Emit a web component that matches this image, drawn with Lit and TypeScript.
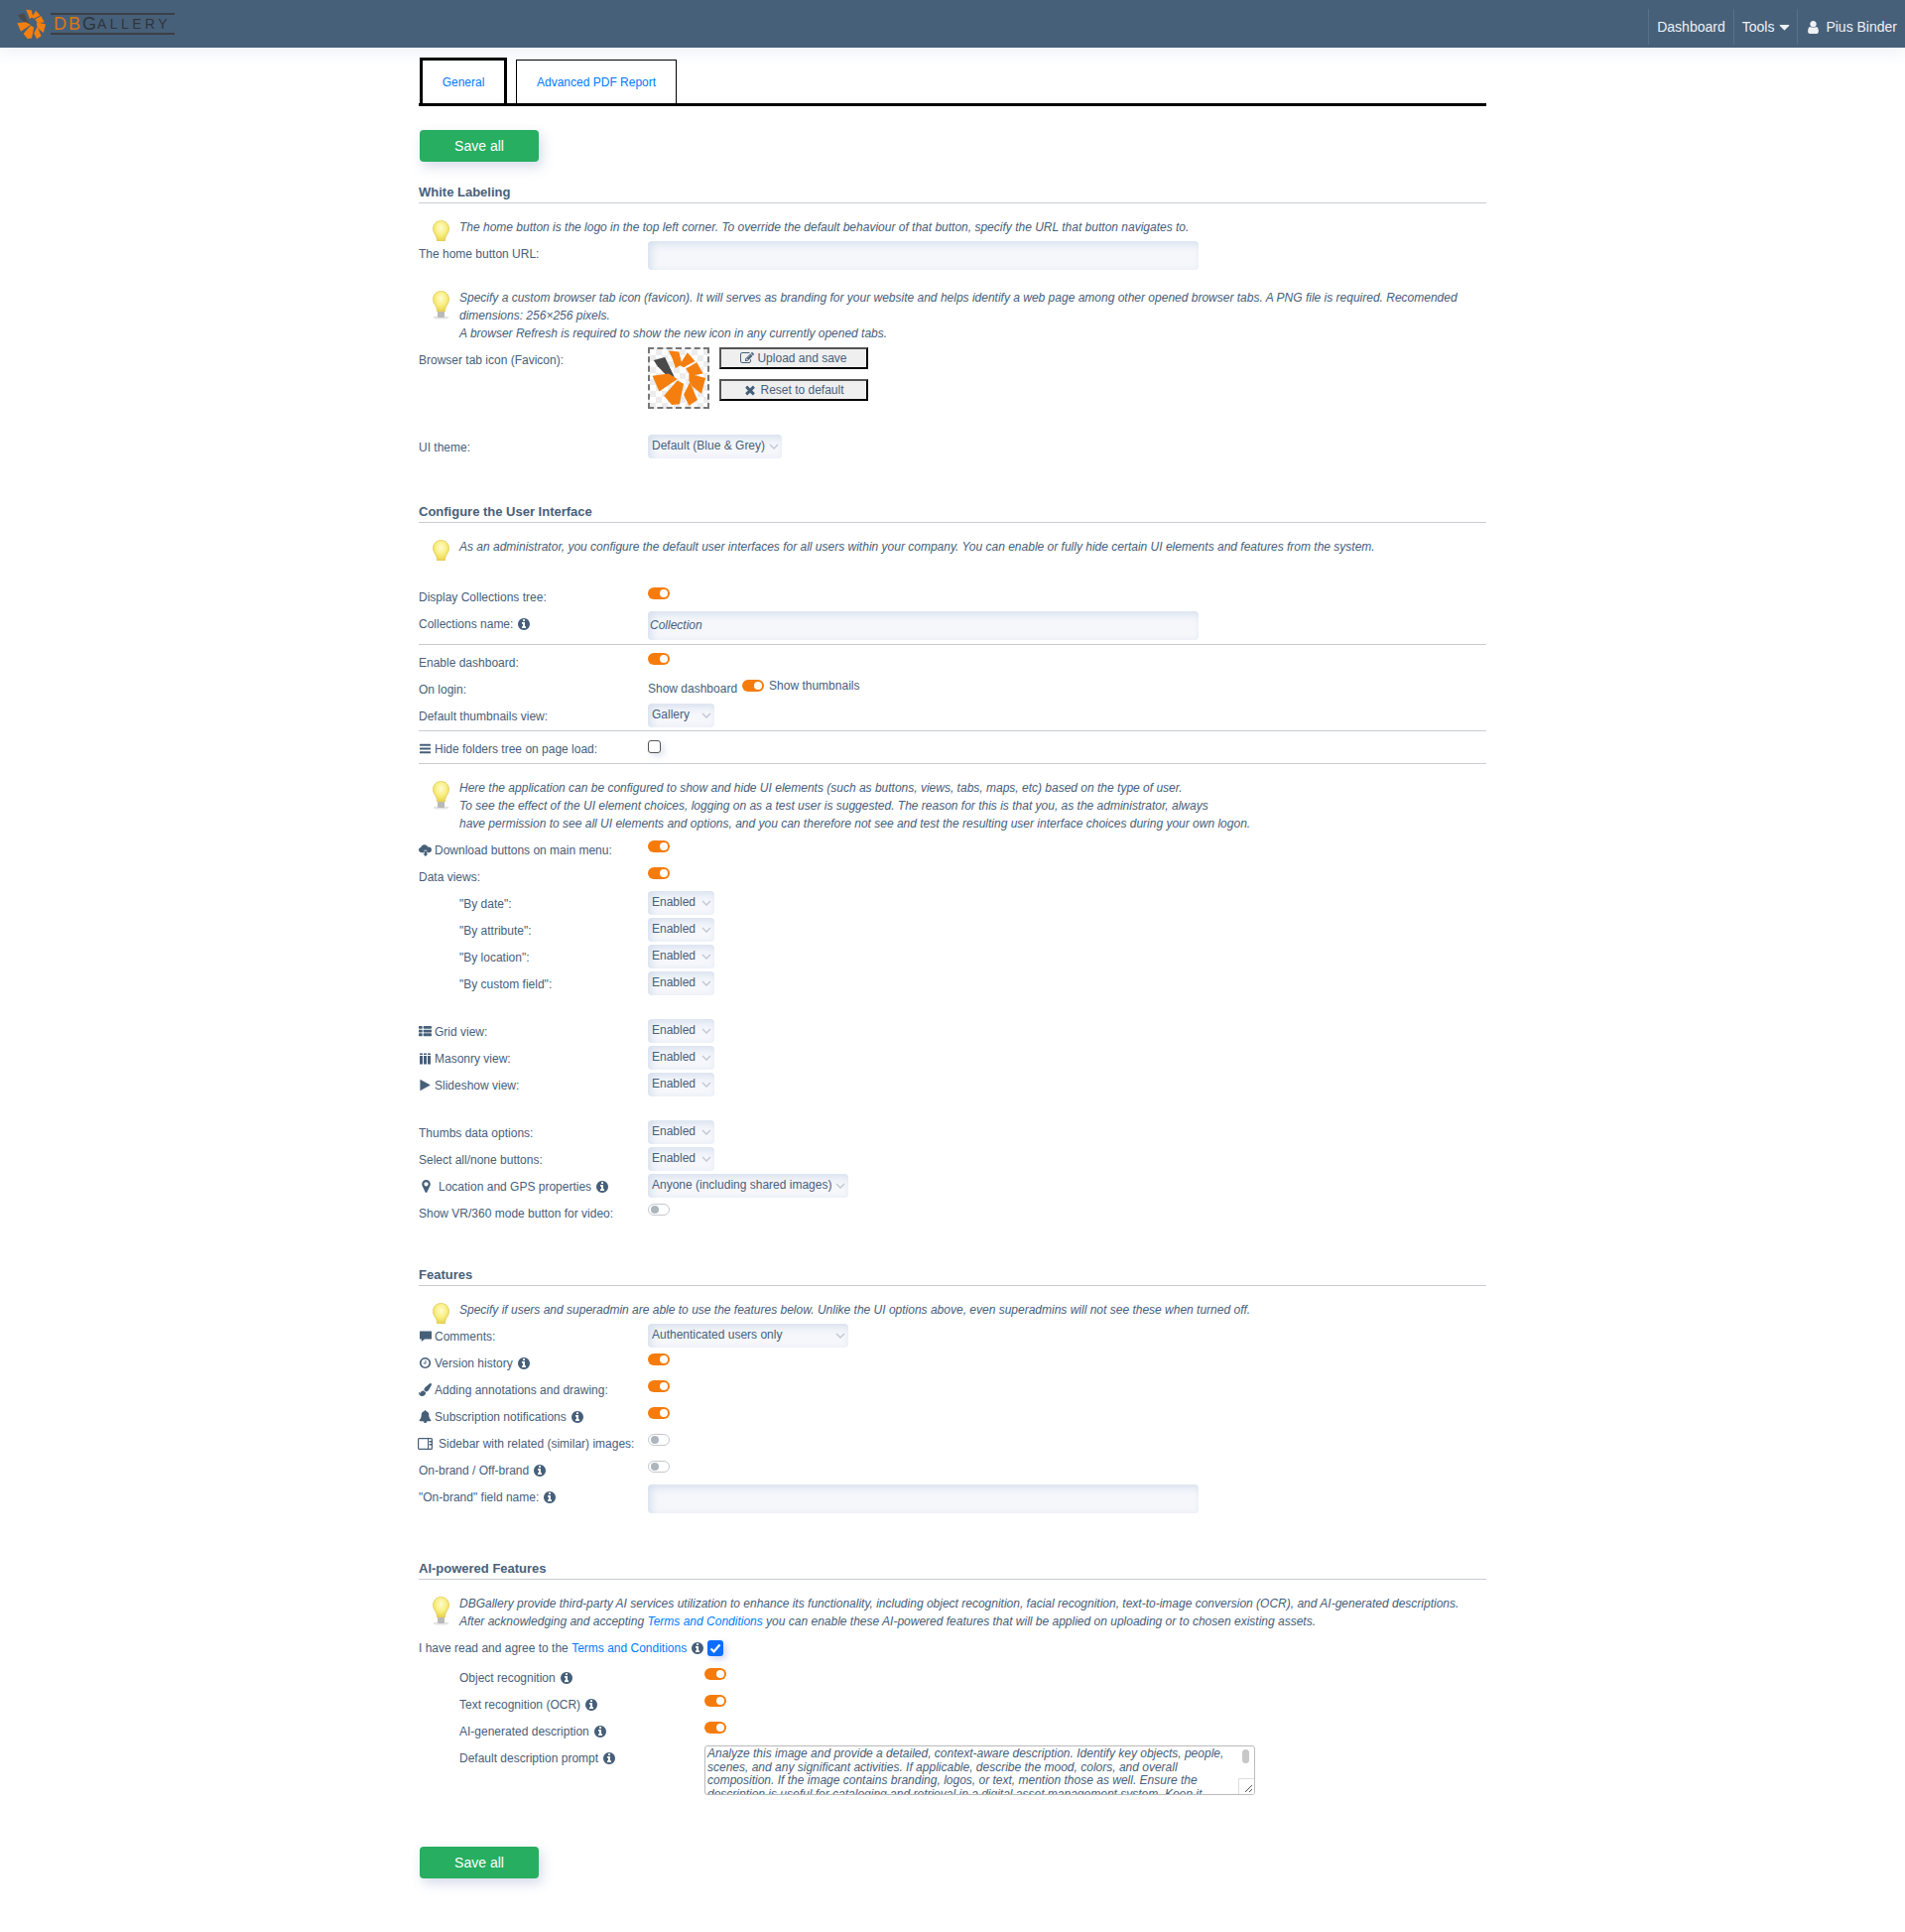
import { LitElement, html, css, svg, TemplateResult } from "lit";
import { customElement } from "lit/decorators.js";

const P: Record<string, [string, string]> = {
  info: ["0 0 1792 1792", "M1152 1376v-160q0-14-9-23t-23-9h-96v-512q0-14-9-23t-23-9h-320q-14 0-23 9t-9 23v160q0 14 9 23t23 9h96v320h-96q-14 0-23 9t-9 23v160q0 14 9 23t23 9h448q14 0 23-9t9-23zm-128-896v-160q0-14-9-23t-23-9h-192q-14 0-23 9t-9 23v160q0 14 9 23t23 9h192q14 0 23-9t9-23zm640 416q0 209-103 385.5t-279.5 279.5-385.5 103-385.5-103-279.5-279.5-103-385.5 103-385.5 279.5-279.5 385.5-103 385.5 103 279.5 279.5 103 385.5z"],
  bars: ["0 0 1792 1792", "M1664 1344v128q0 26-19 45t-45 19h-1408q-26 0-45-19t-19-45v-128q0-26 19-45t45-19h1408q26 0 45 19t19 45zm0-512v128q0 26-19 45t-45 19h-1408q-26 0-45-19t-19-45v-128q0-26 19-45t45-19h1408q26 0 45 19t19 45zm0-512v128q0 26-19 45t-45 19h-1408q-26 0-45-19t-19-45v-128q0-26 19-45t45-19h1408q26 0 45 19t19 45z"],
  user: ["0 0 1792 1792", "M1536 1399q0 109-62.5 187t-150.5 78h-854q-88 0-150.5-78t-62.5-187q0-85 8.5-160.5t31.5-152 58.5-131 94-89 134.5-34.5q131 128 313 128t313-128q76 0 134.5 34.5t94 89 58.5 131 31.5 152 8.5 160.5zm-256-887q0 159-112.5 271.5t-271.5 112.5-271.5-112.5-112.5-271.5 112.5-271.5 271.5-112.5 271.5 112.5 112.5 271.5z"],
  times: ["0 0 1792 1792", "M1490 1322q0 40-28 68l-136 136q-28 28-68 28t-68-28l-294-294-294 294q-28 28-68 28t-68-28l-136-136q-28-28-28-68t28-68l294-294-294-294q-28-28-28-68t28-68l136-136q28-28 68-28t68 28l294 294 294-294q28-28 68-28t68 28l136 136q28 28 28 68t-28 68l-294 294 294 294q28 28 28 68z"],
  play: ["0 0 1792 1792", "M1576 927l-1328 738q-23 13-39.5 3t-16.5-36v-1472q0-26 16.5-36t39.5 3l1328 738q23 13 23 31t-23 31z"],
  marker: ["0 0 1792 1792", "M1152 640q0-106-75-181t-181-75-181 75-75 181 75 181 181 75 181-75 75-181zm256 0q0 109-33 179l-364 774q-16 33-47.5 52t-67.5 19-67.5-19-46.5-52l-365-774q-33-70-33-179 0-212 150-362t362-150 362 150 150 362z"],
  bell: ["0 0 1792 1792", "M912 1696q0-16-16-16-59 0-101.5-42.5t-42.5-101.5q0-16-16-16t-16 16q0 73 51.5 124.5t124.5 51.5q16 0 16-16zm816-288q0 52-38 90t-90 38h-448q0 106-75 181t-181 75-181-75-75-181h-448q-52 0-90-38t-38-90q50-42 91-88t85-119.5 74.5-158.5 50-206 19.5-260q0-152 117-282.5t307-158.5q-8-19-8-39 0-40 28-68t68-28 68 28 28 68q0 20-8 39 190 28 307 158.5t117 282.5q0 139 19.5 260t50 206 74.5 158.5 85 119.5 91 88z"],
  clock: ["0 0 1792 1792", "M1024 544v448q0 14-9 23t-23 9h-320q-14 0-23-9t-9-23v-64q0-14 9-23t23-9h224v-352q0-14 9-23t23-9h64q14 0 23 9t9 23zm416 352q0-148-73-273t-198-198-273-73-273 73-198 198-73 273 73 273 198 198 273 73 273-73 198-198 73-273zm224 0q0 209-103 385.5t-279.5 279.5-385.5 103-385.5-103-279.5-279.5-103-385.5 103-385.5 279.5-279.5 385.5-103 385.5 103 279.5 279.5 103 385.5z"],
  list: ["0 0 1792 1792", "M512 1248v192q0 40-28 68t-68 28h-320q-40 0-68-28t-28-68v-192q0-40 28-68t68-28h320q40 0 68 28t28 68zm0-512v192q0 40-28 68t-68 28h-320q-40 0-68-28t-28-68v-192q0-40 28-68t68-28h320q40 0 68 28t28 68zm1280 512v192q0 40-28 68t-68 28h-960q-40 0-68-28t-28-68v-192q0-40 28-68t68-28h960q40 0 68 28t28 68zm-1280-1024v192q0 40-28 68t-68 28h-320q-40 0-68-28t-28-68v-192q0-40 28-68t68-28h320q40 0 68 28t28 68zm1280 512v192q0 40-28 68t-68 28h-960q-40 0-68-28t-28-68v-192q0-40 28-68t68-28h960q40 0 68 28t28 68zm0-512v192q0 40-28 68t-68 28h-960q-40 0-68-28t-28-68v-192q0-40 28-68t68-28h960q40 0 68 28t28 68z"],
  brush: ["0 0 1792 1792", "M1615 0q70 0 122.5 46.5t52.5 116.5q0 63-45 151-332 629-465 752-97 91-218 91-126 0-216.5-92.5t-90.5-219.5q0-128 92-212l638-579q59-54 130-54zm-909 1034q39 76 106.5 130t150.5 76l1 71q4 213-129.5 347t-348.5 134q-123 0-218-46.5t-152.5-127.5-86.5-183-29-220q7 5 41 30t62 44.5 59 36.5 46 17q41 0 55-37 25-66 57.5-112.5t69.5-76 88-47.5 103-25.5 125-10.5z"],
  edit: ["0 0 1792 1792", "M888 1184l116-116-152-152-116 116v56h96v96h56zm440-720q-16-16-33 1l-350 350q-17 17-1 33t33-1l350-350q17-17 1-33zm80 594v190q0 119-84.5 203.5t-203.5 84.5h-832q-119 0-203.5-84.5t-84.5-203.5v-832q0-119 84.5-203.5t203.5-84.5h832q63 0 117 25 15 7 18 23 3 17-9 29l-49 49q-14 14-32 8-23-6-45-6h-832q-66 0-113 47t-47 113v832q0 66 47 113t113 47h832q66 0 113-47t47-113v-126q0-13 9-22l64-64q15-15 35-7t20 29zm-96-738l288 288-672 672h-288v-288zm444 132l-92 92-288-288 92-92q28-28 68-28t68 28l152 152q28 28 28 68t-28 68z"],
  caret: ["0 0 1792 1792", "M1408 704q0 26-19 45l-448 448q-19 19-45 19t-45-19l-448-448q-19-19-19-45t19-45 45-19h896q26 0 45 19t19 45z"],
};

const ic = (n: string, cls = "ic") =>
  html`<svg class=${cls} viewBox=${P[n][0]}><path fill="currentColor" d=${P[n][1]}></path></svg>`;

const info = () => ic("info", "info");

const masonry = () => html`<svg class="ic" viewBox="0 0 13 13"><path fill="currentColor" d="M1 1.5h3V3H1zM5 1.5h3V3H5zM9 1.5h3V3H9zM1 4h3v8.5H1zM5 4h3v8.5H5zM9 4h3v8.5H9z"></path></svg>`;

const comment = () => html`<svg class="ic" viewBox="0 0 13 13"><path fill="currentColor" d="M1.5 1.5h11q.5 0 .5.5v7q0 .5-.5.5H6l-3.2 2.6V9.5H1.5Q1 9.5 1 9V2q0-.5.5-.5z"></path></svg>`;

const cloud = () => html`<svg class="ic" viewBox="0 0 13 13"><path fill="currentColor" d="M3 9.2C1.3 9.2 0 8 0 6.6 0 5.3 1 4.3 2.2 4.1 2.5 2.4 4 1.2 5.8 1.2c1.6 0 3 1 3.4 2.4.3-.1.6-.2 1-.2 1.5 0 2.8 1.2 2.8 2.8 0 1.7-1.3 3-3 3H8.2V6.8H5.6v2.4z"></path><path fill="currentColor" d="M5.8 7.4h2.2v3h1.5L6.9 13 4.3 10.4h1.5z"></path></svg>`;

const sidebar = () => html`<svg class="ic-wide" viewBox="0 0 15 12"><rect x=".6" y=".6" width="13.8" height="10.8" rx="1" fill="none" stroke="currentColor" stroke-width="1.2"></rect><path fill="currentColor" d="M10 1h1v10h-1zM11.5 3h2.5v1.6h-2.5zM11.5 6h2.5v1.6h-2.5z"></path></svg>`;

const petals: string[] = [
  "60,5 93,8 103,48 82,60 72,30",
  "120,10 144,38 108,58 95,50",
  "150,42 170,78 130,85 115,62",
  "125,78 178,92 165,142 135,118 125,100",
  "128,105 152,162 125,180 108,145",
  "88,100 108,110 95,175 70,178 45,148",
  "8,85 60,78 88,95 30,135",
];
const flower = (cls: string) => html`<svg class=${cls} viewBox="0 0 184 184">
  <polygon points="12,35 48,25 78,88 65,95 25,55" fill="#4a4a4a"></polygon>
  ${petals.map((p) => svg`<polygon points=${p} fill="#f57f0e"></polygon>`)}
</svg>`;

const bulb = () => html`<svg class="bulb" viewBox="0 0 17 29">
  <defs><radialGradient id="bg" cx=".5" cy=".35" r=".65"><stop offset="0" stop-color="#fffbd0"></stop><stop offset=".55" stop-color="#f8ee80"></stop><stop offset="1" stop-color="#e6d04a"></stop></radialGradient></defs>
  <ellipse cx="8.5" cy="27" rx="8" ry="1.6" fill="#e3e3e3"></ellipse>
  <path d="M8.5.5C3.8.5.5 4 .5 8.5c0 3.5 2 5.5 3 7.5.7 1.4 1 3 1 5h8c0-2 .3-3.6 1-5 1-2 3-4 3-7.5C16.5 4 13.2.5 8.5.5z" fill="url(#bg)" stroke="#e2cd5a" stroke-width=".8"></path>
  <rect x="5" y="21" width="7" height="6" rx="1" fill="#b9b9b9"></rect>
</svg>`;

const toggle = (on: boolean) => html`<span class="toggle ${on ? "on" : "off"}"><span class="knob"></span></span>`;

const sel = (label: string, cls: string) => html`<span class="sel ${cls}">${label}<svg class="chev" viewBox="0 0 10 6"><path d="M1 1l4 4 4-4" fill="none" stroke="#c3cad4" stroke-width="1.5"></path></svg></span>`;

const enabled = () => sel("Enabled", "sel-s");

const row = (label: unknown, control: unknown, cls = "") =>
  html`<div class="row ${cls}"><div class="lab">${label}</div><div class="ctl">${control}</div></div>`;

const note = (cls: string, ...lines: unknown[]) =>
  html`<div class="note ${cls}"><div class="bulb-wrap">${bulb()}</div><div class="note-text">${lines.map((l) => html`<div>${l}</div>`)}</div></div>`;

const PROMPT =
  "Analyze this image and provide a detailed, context-aware description. Identify key objects, people, scenes, and any significant activities. If applicable, describe the mood, colors, and overall composition. If the image contains branding, logos, or text, mention those as well. Ensure the description is useful for cataloging and retrieval in a digital asset management system. Keep it concise and factual.";

@customElement("app-root")
export class AppRoot extends LitElement {
  static styles = css`
    :host { display: block; font-family: "Liberation Sans", Arial, sans-serif; font-size: 12px; color: #47607a; background: #fff; min-height: 1947px; }
    * { box-sizing: border-box; }
    a { color: #007bff; text-decoration: none; }
    header { height: 48px; background: #476079; display: flex; justify-content: space-between; box-shadow: 0 4px 16px rgba(110,130,190,.13); position: relative; }
    .logo { display: flex; align-items: center; padding-left: 16px; gap: 4px; }
    .flower { width: 31px; height: 31px; }
    .wordmark { width: 125px; height: 22px; border-top: 2px solid #3a3f46; border-bottom: 2px solid #3a3f46; display: flex; align-items: center; padding-left: 3px; line-height: 18px; white-space: nowrap; }
    .db { color: #dd7710; font-size: 18px; letter-spacing: 2px; }
    .g { color: #2f343a; font-size: 18px; letter-spacing: 1px; }
    .allery { color: #2f343a; font-size: 14px; letter-spacing: 3.4px; }
    nav { display: flex; color: #eef1f5; font-size: 14px; padding-top: 9px; height: 45px; }
    nav > div { border-left: 1px solid #58708a; padding: 0 8px 0; display: flex; align-items: center; }
    nav .ic-user { width: 15px; height: 15px; margin-right: 5px; }
    nav .ic-caret { width: 17px; height: 17px; margin: 0 -4px 0 2px; }
    main { width: 1076px; margin-left: 422px; }
    .tabs { margin-top: 10px; height: 49px; border-bottom: 3px solid #000; display: flex; gap: 9px; align-items: flex-end; }
    .tab { color: #007bff; border: 1px solid #000; border-bottom: 0; height: 44px; padding: 0 20px; display: flex; align-items: center; }
    .tab.active { border-width: 3px; border-bottom: 0; height: 46px; width: 88px; padding: 0; justify-content: center; margin-left: 1px; }
    .save { display: flex; align-items: center; justify-content: center; width: 120px; height: 32px; background: #27ae60; color: #fff; font-size: 14px; border-radius: 4px; box-shadow: 3px 5px 12px rgba(90,110,170,.25); margin-left: 1px; }
    .save.top { margin-top: 24px; }
    .save.bottom { margin-top: 51px; }
    h3 { margin: 0; font-size: 13px; font-weight: bold; height: 23px; line-height: 24px; border-bottom: 1px solid #c9cdd2; }
    h3.s1 { margin-top: 19px; }
    h3.s2 { margin-top: 40px; }
    h3.s3 { margin-top: 37px; }
    h3.s4 { margin-top: 47px; }
    .note { display: flex; margin-top: 15px; padding-left: 14px; font-style: italic; line-height: 18px; }
    .note.m22 { margin-top: 22px; }
    .bulb-wrap { width: 17px; margin-right: 10px; overflow: hidden; padding-top: 2px; flex: none; contain: size; }
    .bulb { display: block; width: 17px; height: 29px; }
    .note-text { padding-bottom: 5px; flex: 1; }
    .row { display: flex; height: 27px; }
    .row.pull { margin-top: -1px; }
    .row.m23 { margin-top: 23px; }
    .row.m21 { margin-top: 21px; }
    .row.m3 { margin-top: 3px; }
    .row.fav { height: 88px; }
    .row.area-row { height: 52px; }
    .lab { width: 231px; height: 27px; flex: none; display: flex; align-items: center; white-space: nowrap; }
    .row.sub .lab { padding-left: 41px; }
    .row.ai .lab { width: 288px; padding-left: 41px; }
    .ctl { flex: 1; display: flex; align-items: flex-start; line-height: 27px; }
    .ic { width: 13px; height: 13px; margin-right: 3px; flex: none; }
    .ic-wide { width: 15px; height: 12px; margin: 0 6px 0 -1px; flex: none; }
    .ic-pin { width: 15px; height: 15px; margin-right: 5px; flex: none; }
    .info { width: 14px; height: 14px; margin-left: 4px; flex: none; }
    .input { margin-top: 1px; width: 555px; height: 29px; background: #f5f7fb; border-radius: 4px; box-shadow: inset 3px 3px 8px #d6dfed; font-style: italic; padding-left: 2px; line-height: 29px; }
    .sel { position: relative; display: block; margin-top: 1px; height: 24px; line-height: 23px; background: #f5f7fb; border-radius: 4px; box-shadow: inset 3px 3px 8px #d6dfed; padding-left: 4px; white-space: nowrap; }
    .sel-s { width: 67px; }
    .sel-m { width: 135px; }
    .sel-l { width: 202px; }
    .chev { position: absolute; right: 3px; top: 9px; width: 10px; height: 6px; }
    .toggle { display: block; width: 22px; height: 12px; border-radius: 6px; margin-top: 4px; position: relative; flex: none; }
    .toggle.on { background: #f57c0c; }
    .toggle.off { background: #fff; border: 1px solid #c4c8cc; }
    .knob { position: absolute; width: 8px; height: 8px; border-radius: 50%; }
    .on .knob { background: #fff; right: 2px; top: 2px; }
    .off .knob { background: #adb5bd; left: 2px; top: 1px; }
    .cb { display: block; margin-top: 5px; width: 13px; height: 13px; border: 1px solid #555; border-radius: 3px; background: #fff; box-shadow: 3px 3px 6px rgba(110,130,190,.22); }
    .cb-on { display: block; margin: 0 0 0 3px; width: 16px; height: 16px; border-radius: 3px; background: #0d6efd; box-shadow: 3px 3px 6px rgba(110,130,190,.3); flex: none; }
    .cb-on svg { display: block; width: 16px; height: 16px; }
    hr { margin: 0; border: 0; border-top: 1px solid #c9cdd2; height: 1px; }
    hr.a { margin: 7px 0 4px; }
    hr.b { margin: 1px 0 4px; }
    hr.c { margin: 1px 0 0; }
    .favicon { margin-top: 1px; width: 62px; height: 62px; border: 2px dashed #777; background-color: #fff; background-image: conic-gradient(#ececec 25%, #fff 25% 50%, #ececec 50% 75%, #fff 75%); background-size: 12px 12px; flex: none; }
    .favicon .big { display: block; width: 58px; height: 58px; }
    .fbtns { display: flex; flex-direction: column; gap: 10px; margin: 1px 0 0 10px; }
    .fbtn { width: 150px; height: 22px; background: #efefef; border: 2px solid; border-color: #555 #000 #000 #555; display: flex; align-items: center; justify-content: center; line-height: 18px; }
    .fbtn .ic { width: 14px; height: 14px; margin-right: 3px; }
    .login { display: flex; align-items: flex-start; white-space: nowrap; }
    .login .t1 { margin-top: 1px; line-height: 25px; }
    .login .t2 { margin: -2px 0 0 5px; line-height: 25px; }
    .login .toggle { margin: 4px 0 0 5px; }
    .area { position: relative; margin-top: 1px; width: 555px; height: 50px; border: 1px solid #bbb; border-radius: 3px; overflow: hidden; font: italic 12px/13.5px "Liberation Sans", Arial, sans-serif; color: #47607a; padding: 1px 18px 0 2px; background: #fff; }
    .thumb { position: absolute; right: 5px; top: 3px; width: 7px; height: 14px; border-radius: 4px; background: #c8c8c8; }
    .corner { position: absolute; right: 0; bottom: 0; width: 16px; height: 16px; background: #fff; border: 1px solid #ddd; border-width: 1px 0 0 1px; }
    .corner svg { display: block; width: 15px; height: 15px; }
    .tail { height: 54px; }
  `;

  render(): TemplateResult {
    return html`
      <header>
        <div class="logo">
          ${flower("flower")}
          <div class="wordmark"><span class="db">DB</span><span class="g">G</span><span class="allery">ALLERY</span></div>
        </div>
        <nav>
          <div>Dashboard</div>
          <div>Tools${ic("caret", "ic-caret")}</div>
          <div>${ic("user", "ic-user")}Pius Binder</div>
        </nav>
      </header>
      <main>
        <div class="tabs"><div class="tab active">General</div><div class="tab">Advanced PDF Report</div></div>
        <div class="save top">Save all</div>

        <h3 class="s1">White Labeling</h3>
        ${note("", "The home button is the logo in the top left corner. To override the default behaviour of that button, specify the URL that button navigates to.")}
        ${row("The home button URL:", html`<div class="input"></div>`, "pull")}
        ${note(
          "m22",
          "Specify a custom browser tab icon (favicon). It will serves as branding for your website and helps identify a web page among other opened browser tabs. A PNG file is required. Recomended dimensions: 256×256 pixels.",
          "A browser Refresh is required to show the new icon in any currently opened tabs."
        )}
        ${row("Browser tab icon (Favicon):", html`
          <div class="favicon">${flower("big")}</div>
          <div class="fbtns">
            <div class="fbtn">${ic("edit")}Upload and save</div>
            <div class="fbtn">${ic("times")}Reset to default</div>
          </div>`, "fav pull")}
        ${row("UI theme:", sel("Default (Blue & Grey)", "sel-m"))}

        <h3 class="s2">Configure the User Interface</h3>
        ${note("", "As an administrator, you configure the default user interfaces for all users within your company. You can enable or fully hide certain UI elements and features from the system.")}
        ${row("Display Collections tree:", toggle(true), "m23")}
        ${row(html`Collections name: ${info()}`, html`<div class="input">Collection</div>`)}
        <hr class="a" />
        ${row("Enable dashboard:", toggle(true))}
        ${row("On login:", html`<div class="login"><span class="t1">Show dashboard</span>${toggle(true)}<span class="t2">Show thumbnails</span></div>`)}
        ${row("Default thumbnails view:", sel("Gallery", "sel-s"))}
        <hr class="b" />
        ${row(html`${ic("bars")}Hide folders tree on page load:`, html`<span class="cb"></span>`)}
        <hr class="c" />
        ${note(
          "",
          "Here the application can be configured to show and hide UI elements (such as buttons, views, tabs, maps, etc) based on the type of user.",
          "To see the effect of the UI element choices, logging on as a test user is suggested. The reason for this is that you, as the administrator, always",
          "have permission to see all UI elements and options, and you can therefore not see and test the resulting user interface choices during your own logon."
        )}
        ${row(html`${cloud()}Download buttons on main menu:`, toggle(true), "pull")}
        ${row("Data views:", toggle(true))}
        ${row('"By date":', enabled(), "sub")}
        ${row('"By attribute":', enabled(), "sub")}
        ${row('"By location":', enabled(), "sub")}
        ${row('"By custom field":', enabled(), "sub")}
        ${row(html`${ic("list")}Grid view:`, enabled(), "m21")}
        ${row(html`${masonry()}Masonry view:`, enabled())}
        ${row(html`${ic("play")}Slideshow view:`, enabled())}
        ${row("Thumbs data options:", enabled(), "m21")}
        ${row("Select all/none buttons:", enabled())}
        ${row(html`${ic("marker", "ic-pin")}Location and GPS properties ${info()}`, sel("Anyone (including shared images)", "sel-l"))}
        ${row("Show VR/360 mode button for video:", toggle(false))}

        <h3 class="s3">Features</h3>
        ${note("", "Specify if users and superadmin are able to use the features below. Unlike the UI options above, even superadmins will not see these when turned off.")}
        ${row(html`${comment()}Comments:`, sel("Authenticated users only", "sel-l"), "pull")}
        ${row(html`${ic("clock")}Version history ${info()}`, toggle(true))}
        ${row(html`${ic("brush")}Adding annotations and drawing:`, toggle(true))}
        ${row(html`${ic("bell")}Subscription notifications ${info()}`, toggle(true))}
        ${row(html`${sidebar()}Sidebar with related (similar) images:`, toggle(false))}
        ${row(html`On-brand / Off-brand ${info()}`, toggle(false))}
        ${row(html`"On-brand" field name: ${info()}`, html`<div class="input"></div>`)}

        <h3 class="s4">AI-powered Features</h3>
        ${note(
          "",
          "DBGallery provide third-party AI services utilization to enhance its functionality, including object recognition, facial recognition, text-to-image conversion (OCR), and AI-generated descriptions.",
          html`After acknowledging and accepting <a>Terms and Conditions</a> you can enable these AI-powered features that will be applied on uploading or to chosen existing assets.`
        )}
        <div class="row pull">
          <div class="lab">I have read and agree to the&nbsp;<a>Terms and Conditions</a> ${info()}<span class="cb-on"><svg viewBox="0 0 16 16"><path d="M3.5 8.5l3 3 6-7" fill="none" stroke="#fff" stroke-width="2.2"></path></svg></span></div>
        </div>
        ${row(html`Object recognition ${info()}`, toggle(true), "ai m3")}
        ${row(html`Text recognition (OCR) ${info()}`, toggle(true), "ai")}
        ${row(html`AI-generated description ${info()}`, toggle(true), "ai")}
        ${row(html`Default description prompt ${info()}`, html`<div class="area">${PROMPT}<span class="thumb"></span><span class="corner"><svg viewBox="0 0 15 15"><path d="M6 13l7-7M10 13l3-3" stroke="#555" stroke-width="1" fill="none"></path></svg></span></div>`, "ai area-row")}

        <div class="save bottom">Save all</div>
        <div class="tail"></div>
      </main>
    `;
  }
}
